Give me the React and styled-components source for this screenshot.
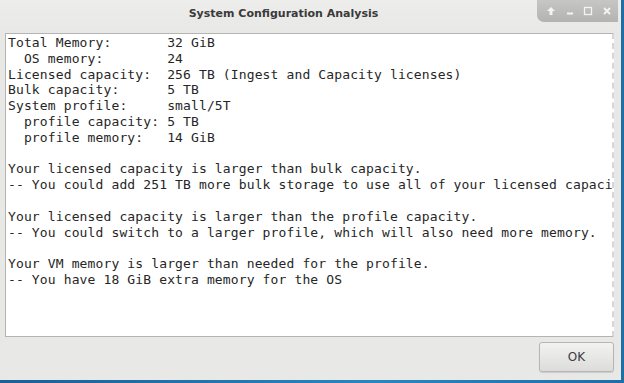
import React from 'react';
import styled, { createGlobalStyle } from 'styled-components';

const GlobalStyle = createGlobalStyle`
  html, body {
    margin: 0;
    padding: 0;
    width: 624px;
    height: 383px;
    overflow: hidden;
    background: linear-gradient(90deg, #1c5f93, #2a86bf 60%, #1f6ea6);
  }
`;

const Window = styled.div`
  width: 621px;
  height: 380px;
  background: #e8e8e6;
  display: flex;
  flex-direction: column;
  box-sizing: border-box;
`;

const TitleBar = styled.div`
  height: 33px;
  display: flex;
  align-items: flex-start;
  background: linear-gradient(#ededec, #e8e8e6);
`;

const Title = styled.div`
  flex: 1;
  padding-left: 30px;
  text-align: center;
  font-family: "DejaVu Sans", sans-serif;
  font-weight: bold;
  font-size: 11px;
  line-height: 27px;
  color: #3a3a3a;
`;

const Controls = styled.div`
  width: 81px;
  height: 22px;
  margin-right: 3px;
  display: flex;
  align-items: center;
  justify-content: space-around;
  padding: 0 2px 0 5px;
  box-sizing: border-box;
  background: linear-gradient(#c6c6c5, #b3b3b2);
  border-bottom-left-radius: 7px;
`;

const ControlIcon = styled.svg`
  width: 10px;
  height: 10px;
  display: block;
`;

const TextPanel = styled.div`
  margin: 0 7px 0 5px;
  height: 304px;
  box-sizing: border-box;
  background: #fff;
  border: 1px solid #b4b4b2;
  border-right: 2px dashed #d6d6d6;
  overflow: hidden;
`;

const Output = styled.pre`
  margin: 0;
  padding: 1px 0 0 2px;
  font-family: "DejaVu Sans Mono", monospace;
  font-size: 13px;
  letter-spacing: 0.13px;
  line-height: 15.8px;
  color: #262626;
  white-space: pre;
`;

const Footer = styled.div`
  flex: 1;
  display: flex;
  justify-content: flex-end;
  align-items: flex-start;
  padding: 5px 7px 0 0;
`;

const Button = styled.button`
  width: 75px;
  height: 30px;
  border: 1px solid #b6b6b4;
  border-radius: 3px;
  background: linear-gradient(#f2f2f1, #dcdcdb);
  box-shadow: 0 1px 1px rgba(0, 0, 0, 0.12);
  font-family: "DejaVu Sans", sans-serif;
  font-size: 12px;
  color: #3c3c3c;
  padding: 0;
`;

const report = `Total Memory:       32 GiB
  OS memory:        24
Licensed capacity:  256 TB (Ingest and Capacity licenses)
Bulk capacity:      5 TB
System profile:     small/5T
  profile capacity: 5 TB
  profile memory:   14 GiB

Your licensed capacity is larger than bulk capacity.
-- You could add 251 TB more bulk storage to use all of your licensed capacity.

Your licensed capacity is larger than the profile capacity.
-- You could switch to a larger profile, which will also need more memory.

Your VM memory is larger than needed for the profile.
-- You have 18 GiB extra memory for the OS`;

export default function App() {
  return (
    <>
      <GlobalStyle />
      <Window>
        <TitleBar>
          <Title>System Configuration Analysis</Title>
          <Controls>
            <ControlIcon viewBox="0 0 10 10">
              <path d="M5 1 L9 5 L6.5 5 L6.5 9 L3.5 9 L3.5 5 L1 5 Z" fill="#f4f4f4" />
            </ControlIcon>
            <ControlIcon viewBox="0 0 10 10">
              <rect x="2" y="6.5" width="6" height="2" fill="#f4f4f4" />
            </ControlIcon>
            <ControlIcon viewBox="0 0 10 10">
              <rect x="1.5" y="1.5" width="7" height="7" fill="none" stroke="#f4f4f4" strokeWidth="1.3" />
            </ControlIcon>
            <ControlIcon viewBox="0 0 10 10">
              <path d="M2 2 L8 8 M8 2 L2 8" stroke="#f4f4f4" strokeWidth="1.8" />
            </ControlIcon>
          </Controls>
        </TitleBar>
        <TextPanel>
          <Output>{report}</Output>
        </TextPanel>
        <Footer>
          <Button>OK</Button>
        </Footer>
      </Window>
    </>
  );
}
